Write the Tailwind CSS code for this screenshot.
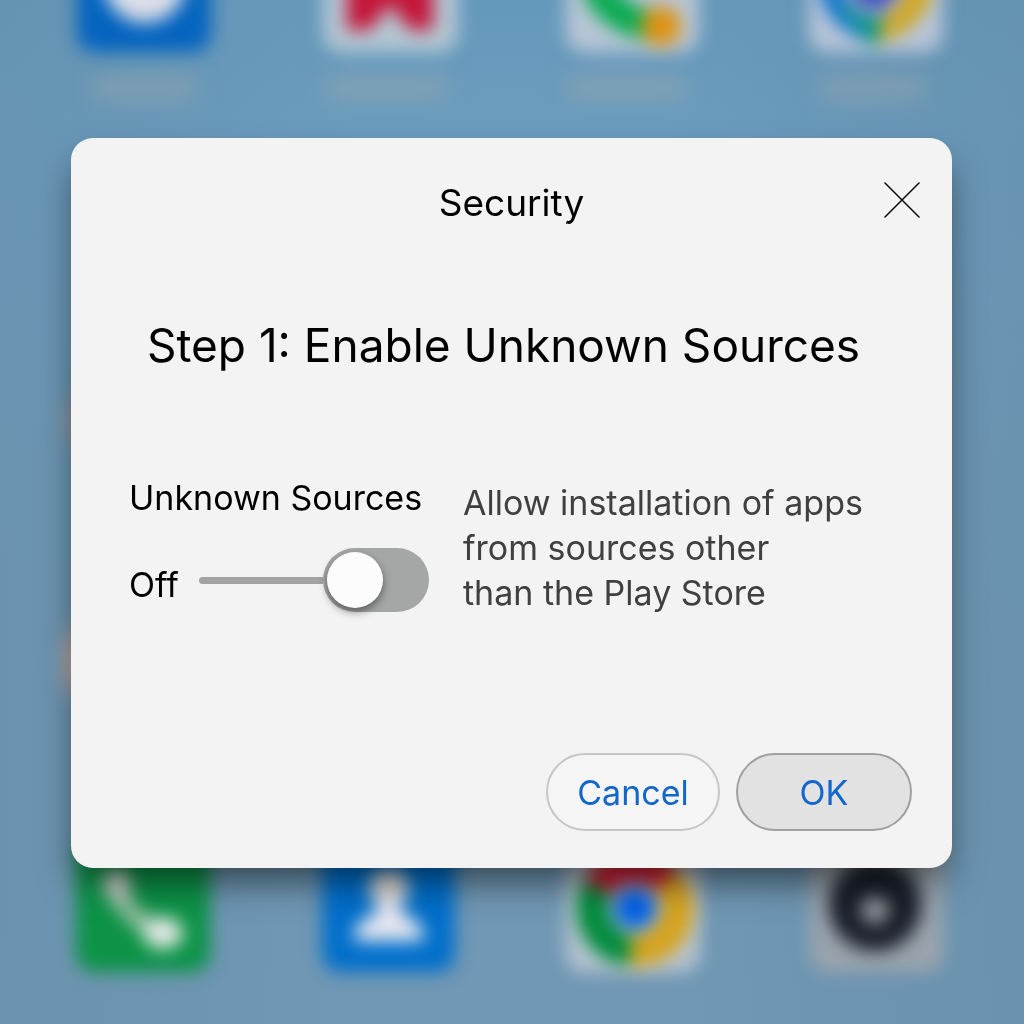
<!DOCTYPE html>
<html lang="en">
<head>
    <meta charset="UTF-8">
    <meta name="viewport" content="width=device-width, initial-scale=1.0">
    <title>Security</title>
    <script src="https://cdn.jsdelivr.net/npm/@tailwindcss/browser@4"></script>
</head>
<body class="bg-[#6c96b4] min-h-screen font-['Inter',sans-serif] text-black">
    <!-- Blurred home screen -->
    <svg class="fixed inset-0 w-full h-full" viewBox="0 0 1024 1024" preserveAspectRatio="xMidYMid slice" aria-hidden="true">
        <defs>
            <linearGradient id="sky" x1="0" y1="0" x2="0" y2="1">
                <stop offset="0" stop-color="#6599bb"/>
                <stop offset="0.12" stop-color="#6a9cbe"/>
                <stop offset="0.45" stop-color="#7099b7"/>
                <stop offset="1" stop-color="#7198b4"/>
            </linearGradient>
            <linearGradient id="edges" x1="0" y1="0" x2="1" y2="0">
                <stop offset="0" stop-color="#648ca8" stop-opacity="0.45"/>
                <stop offset="0.35" stop-color="#648ca8" stop-opacity="0"/>
                <stop offset="0.65" stop-color="#648ca8" stop-opacity="0"/>
                <stop offset="1" stop-color="#648ca8" stop-opacity="0.5"/>
            </linearGradient>
            <filter id="soft" filterUnits="userSpaceOnUse" x="-50" y="-120" width="1124" height="1264" color-interpolation-filters="sRGB">
                <feGaussianBlur stdDeviation="9"/>
            </filter>
            <filter id="softer" filterUnits="userSpaceOnUse" x="-50" y="-120" width="1124" height="1264" color-interpolation-filters="sRGB">
                <feGaussianBlur stdDeviation="12"/>
            </filter>
        </defs>
        <rect width="1024" height="1024" fill="url(#sky)"/>
        <rect width="1024" height="1024" fill="url(#edges)"/>
        <!-- App names and far icons -->
        <g filter="url(#softer)">
            <g fill="#9aa5ac" opacity="0.7">
                <rect x="93" y="79" width="102" height="18"/>
                <rect x="324" y="79" width="124" height="18"/>
                <rect x="566" y="79" width="120" height="18"/>
                <rect x="822" y="79" width="103" height="18"/>
            </g>
            <ellipse cx="86" cy="662" rx="18" ry="36" fill="#dfab91"/>
            <ellipse cx="86" cy="420" rx="14" ry="26" fill="#a99386"/>
        </g>
        <!-- Icon tiles -->
        <g filter="url(#soft)">
            <rect x="77" y="-82" width="134" height="134" rx="18" fill="#0464bf"/>
            <rect x="323" y="-82" width="135" height="134" rx="18" fill="#b4c7d3"/>
            <rect x="566" y="-82" width="133" height="134" rx="18" fill="#b8c6d6"/>
            <rect x="809" y="-82" width="134" height="134" rx="18" fill="#b8c5d8"/>
            <rect x="76" y="838" width="134" height="134" rx="18" fill="#0c9347"/>
            <rect x="322" y="838" width="133" height="134" rx="18" fill="#006fcb"/>
            <rect x="566" y="838" width="134" height="134" rx="18" fill="#b8c4d0"/>
            <rect x="810" y="838" width="134" height="134" rx="18" fill="#9aa4ad"/>
        </g>
        <!-- Icon glyphs -->
        <g filter="url(#soft)">
            <circle cx="145" cy="-18" r="41" fill="#dcdde8"/>
            <path d="M347-40V30H370L390 4L410 30H433V-40Z" fill="#c41538"/>
            <path d="M596-20Q604 17 656 27" fill="none" stroke="#08ab50" stroke-width="31"/>
            <circle cx="661" cy="26" r="20" fill="#de9210"/>
            <path d="M819-20C819 12 842 35 876 43V-20Z" fill="#0870d0"/>
            <path d="M836 4L876 50L896 4Z" fill="#009487"/>
            <path d="M876 43C908 36 933 12 934-20H895L885 14Z" fill="#d1a71e"/>
            <circle cx="874" cy="-14" r="31" fill="#b8bfd8"/>
            <circle cx="874" cy="-13" r="23" fill="#4252bd"/>
            <path d="M117 883Q120 915 162 932" fill="none" stroke="#9ebfa8" stroke-width="18"/>
            <ellipse cx="117" cy="884" rx="14" ry="17" fill="#d0d4ce"/>
            <ellipse cx="163" cy="933" rx="20" ry="16" fill="#e4eae6"/>
            <circle cx="389" cy="888" r="20" fill="#dcd8d2"/>
            <path d="M377 896H401V914C420 918 424 930 424 941H354C354 930 358 918 377 914Z" fill="#eae8f0"/>
            <path d="M635 908L584 879A58 58 0 0 1 688 885Z" fill="#ce1c33"/>
            <path d="M635 908L584 879A58 58 0 0 0 629 966Z" fill="#008b3c"/>
            <path d="M635 908L678 869A58 58 0 0 1 629 966Z" fill="#d6a31a"/>
        </g>
        <g filter="url(#soft)">
            <circle cx="635" cy="908" r="27" fill="#a8bccc"/>
            <circle cx="635" cy="908" r="20" fill="#0060e8"/>
            <circle cx="875" cy="905" r="46" fill="#181d29"/>
            <circle cx="875" cy="910" r="14" fill="#9a9da2"/>
        </g>
    </svg>

    <main class="relative min-h-screen flex items-center justify-center pl-[71px] pr-18 pt-6 pb-[42px]">
        <section role="dialog" aria-labelledby="dialogTitle" class="w-full max-w-[881px] bg-[#f3f3f3] rounded-[22px] px-10 pt-[41px] pb-[37px] shadow-[0_20px_36px_-6px_rgba(0,0,0,0.55)]">
            <header class="grid grid-cols-[1fr_auto_1fr] items-center">
                <h1 id="dialogTitle" class="col-start-2 text-[37px] leading-12">Security</h1>
                <button type="button" aria-label="Close" class="justify-self-end -mr-2 mb-1.5 cursor-pointer">
                    <svg class="block w-9 h-9" viewBox="0 0 36 36" fill="none" stroke="#111" stroke-width="1.6" stroke-linecap="round">
                        <path d="M1 1L35 35M35 1L1 35"/>
                    </svg>
                </button>
            </header>

            <h2 class="mt-[90px] pr-4 text-center text-[46px] leading-14">Step 1: Enable Unknown Sources</h2>

            <div class="mt-[102px] px-[18px] flex gap-[34px]">
                <div class="w-[300px] shrink-0">
                    <label for="unknownSources" class="block whitespace-nowrap text-[34px] leading-[45px]">Unknown Sources</label>
                    <div class="mt-7 flex items-center">
                        <span class="mr-5 pt-2 text-[34px] leading-[45px]">Off</span>
                        <span class="h-[7px] flex-1 rounded-l-full bg-[#a3a3a3]"></span>
                        <span class="relative flex w-[106px] h-16">
                            <input id="unknownSources" type="checkbox" role="switch" class="appearance-none w-full h-full rounded-full bg-[#a5a6a6] cursor-pointer">
                            <span class="absolute left-1 top-1 size-14 rounded-full bg-[#fcfcfc] shadow-[0_4px_8px_rgba(0,0,0,0.45)] pointer-events-none"></span>
                        </span>
                    </div>
                </div>
                <p class="pt-[5px] text-[34px] leading-[45px] text-[#404040]">Allow installation of apps<br>from sources other<br>than the Play Store</p>
            </div>

            <div class="mt-[138px] flex justify-end gap-4">
                <button type="button" class="w-[174px] h-[78px] rounded-full border-2 border-[#c6c6c6] bg-[#f5f5f5] text-[34px] text-[#1266cc] cursor-pointer">Cancel</button>
                <button type="button" class="w-[176px] h-[78px] rounded-full border-2 border-[#a0a0a0] bg-[#e2e2e2] text-[34px] text-[#1266cc] cursor-pointer">OK</button>
            </div>
        </section>
    </main>
</body>
</html>
